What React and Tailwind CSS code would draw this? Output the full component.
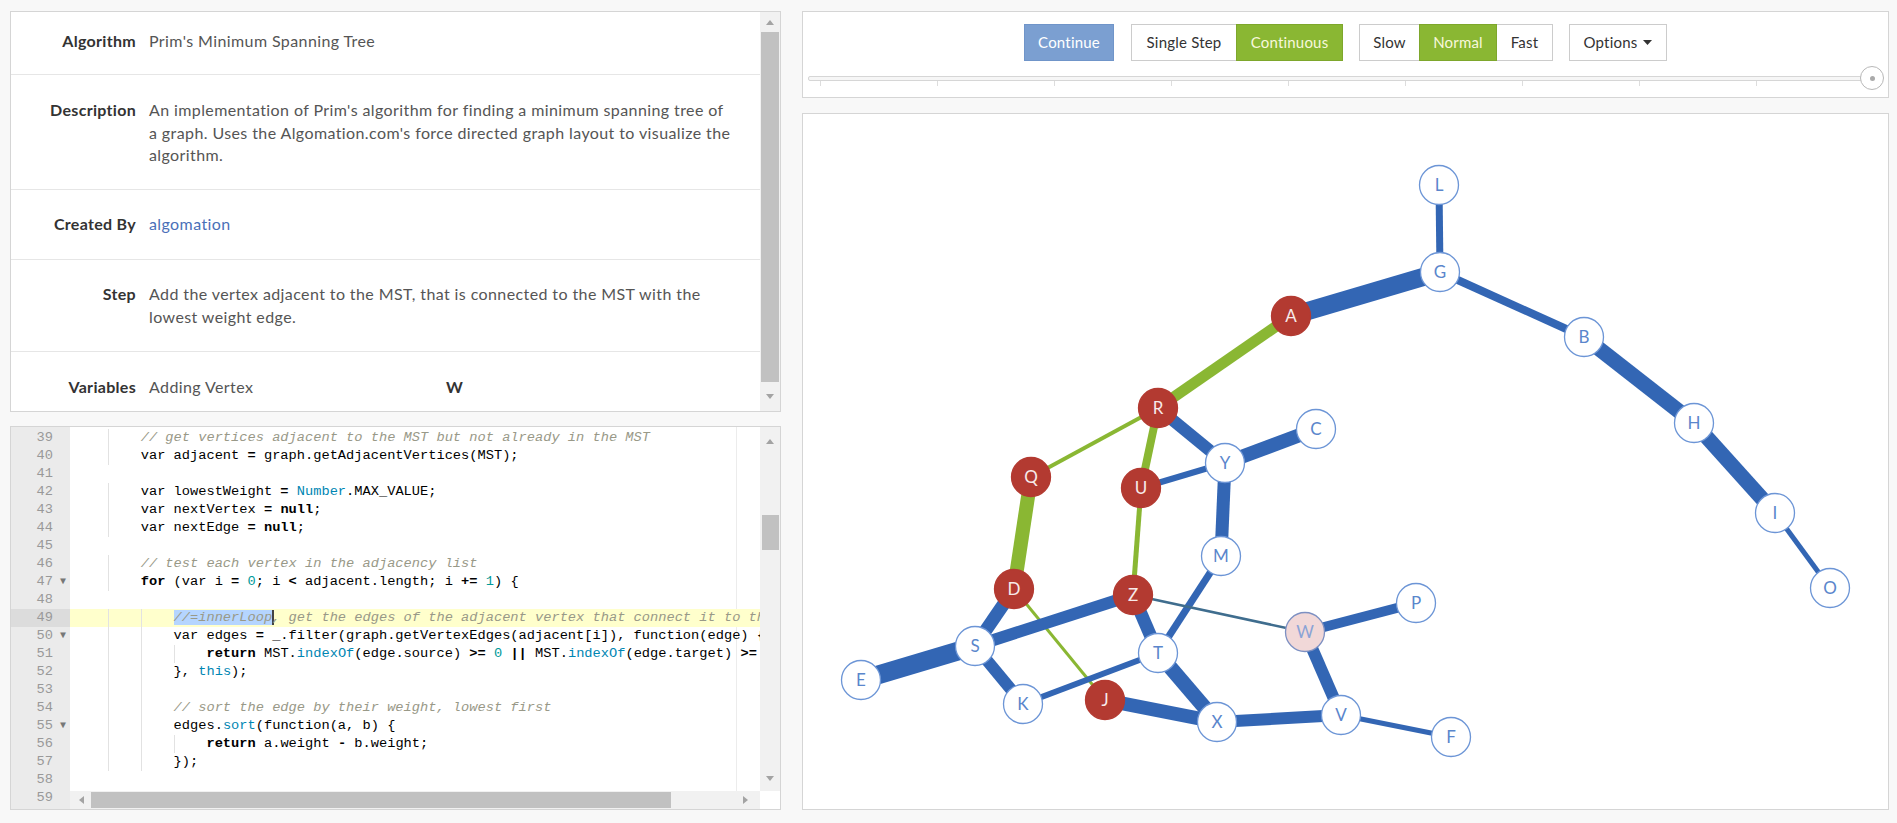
import React from "react";

const BLUE = "#3366b4";
const GREEN = "#8ab733";
const SLATE = "#3f6d8e";

const nodes = {
  L: [1439, 185, "w"], G: [1440, 272, "w"], A: [1291, 316, "r"], B: [1584, 337, "w"],
  H: [1694, 423, "w"], I: [1775, 513, "w"], O: [1830, 588, "w"], R: [1158, 408, "r"],
  C: [1316, 429, "w"], Y: [1225, 463, "w"], Q: [1031, 477, "r"], U: [1141, 488, "r"],
  M: [1221, 556, "w"], D: [1014, 589, "r"], Z: [1133, 595, "r"], W: [1305, 632, "p"],
  P: [1416, 603, "w"], S: [975, 646, "w"], T: [1158, 653, "w"], E: [861, 680, "w"],
  K: [1023, 704, "w"], J: [1105, 700, "r"], X: [1217, 722, "w"], V: [1341, 715, "w"],
  F: [1451, 737, "w"],
};

const edges = [
  ["L", "G", 7, BLUE], ["G", "A", 18, BLUE], ["G", "B", 8, BLUE], ["B", "H", 15, BLUE],
  ["H", "I", 15, BLUE], ["I", "O", 5, BLUE], ["A", "R", 11, GREEN], ["R", "Q", 4, GREEN],
  ["R", "U", 8, GREEN], ["R", "Y", 12, BLUE], ["Y", "C", 14, BLUE], ["U", "Y", 6, BLUE],
  ["Y", "M", 13, BLUE], ["Q", "D", 14, GREEN], ["U", "Z", 5, GREEN], ["M", "T", 7, BLUE],
  ["D", "S", 13, BLUE], ["D", "J", 3, GREEN], ["Z", "S", 12, BLUE], ["Z", "T", 13, BLUE],
  ["Z", "W", 2.5, SLATE], ["W", "P", 10, BLUE], ["W", "V", 12, BLUE], ["S", "E", 19, BLUE],
  ["S", "K", 12, BLUE], ["K", "T", 6, BLUE], ["T", "X", 15, BLUE], ["J", "X", 14, BLUE],
  ["X", "V", 12, BLUE], ["V", "F", 5, BLUE],
];

// code lines: n, indent, tokens, fold, active
const code = [
  [39, 8, [["// get vertices adjacent to the MST but not already in the MST", "c"]]],
  [40, 8, [["var adjacent "], ["=", "o"], [" graph.getAdjacentVertices(MST);"]]],
  [41, 0, []],
  [42, 8, [["var lowestWeight "], ["=", "o"], [" "], ["Number", "f"], [".MAX_VALUE;"]]],
  [43, 8, [["var nextVertex "], ["=", "o"], [" "], ["null", "k"], [";"]]],
  [44, 8, [["var nextEdge "], ["=", "o"], [" "], ["null", "k"], [";"]]],
  [45, 0, []],
  [46, 8, [["// test each vertex in the adjacency list", "c"]]],
  [47, 8, [["for", "k"], [" (var i "], ["=", "o"], [" "], ["0", "n"], ["; i "], ["<", "o"], [" adjacent.length; i "], ["+=", "o"], [" "], ["1", "n"], [") {"]], true],
  [48, 0, []],
  [49, 12, [["//=innerLoop", "s"], [", get the edges of the adjacent vertex that connect it to the MST", "c"]], false, true],
  [50, 12, [["var edges "], ["=", "o"], [" _.filter(graph.getVertexEdges(adjacent[i]), function(edge) {"]], true],
  [51, 16, [["return", "k"], [" MST."], ["indexOf", "f"], ["(edge.source) "], [">=", "o"], [" "], ["0", "n"], [" "], ["||", "o"], [" MST."], ["indexOf", "f"], ["(edge.target) "], [">=", "o"], [" "], ["0", "n"], [";"]]],
  [52, 12, [["}, "], ["this", "f"], [");"]]],
  [53, 12, []],
  [54, 12, [["// sort the edge by their weight, lowest first", "c"]]],
  [55, 12, [["edges."], ["sort", "f"], ["(function(a, b) {"]], true],
  [56, 16, [["return", "k"], [" a.weight "], ["-", "o"], [" b.weight;"]]],
  [57, 12, [["});"]]],
  [58, 0, []],
  [59, 0, []],
];

const tokClass = {
  c: "italic text-[#999988]",
  k: "font-bold",
  o: "font-bold",
  n: "text-[#009999]",
  f: "text-[#0086b3]",
  s: "italic text-[#999988] bg-[#b5d5ff] shadow-[2px_0_0_#444]",
};

function Arrow({ dir }) {
  const pts = {
    up: "0,5 4,0 8,5",
    down: "0,0 4,5 8,0",
    left: "5,0 0,4 5,8",
    right: "0,0 5,4 0,8",
  }[dir];
  const horiz = dir === "left" || dir === "right";
  return (
    <svg width={horiz ? 5 : 8} height={horiz ? 8 : 5} viewBox={horiz ? "0 0 5 8" : "0 0 8 5"}>
      <polygon points={pts} fill="#a3a3a3" />
    </svg>
  );
}

function Row({ label, children, h, pt = "pt-[23px]", last }) {
  return (
    <div className={`flex items-start ${h} ${pt} ${last ? "" : "border-b border-[#e6e6e6]"}`}>
      <div className="w-[125px] shrink-0 text-right font-bold text-[#333] tracking-[0.3px]">{label}</div>
      <div className="ml-[13px] w-[610px] text-[#555] tracking-[0.4px]">{children}</div>
    </div>
  );
}

function InfoPanel() {
  return (
    <div className="flex h-[401px] border border-[#d5d5d5] bg-white text-[16px] leading-[22.5px]">
      <div className="flex-1 overflow-hidden">
        <Row label="Algorithm" h="h-[63px]" pt="pt-[18px]">Prim's Minimum Spanning Tree</Row>
        <Row label="Description" h="h-[115px]" pt="pt-[24px]">
          An implementation of Prim's algorithm for finding a minimum spanning tree of
          <br />
          a graph. Uses the Algomation.com's force directed graph layout to visualize the
          <br />
          algorithm.
        </Row>
        <Row label="Created By" h="h-[70px]">
          <span className="text-[#4a70b8]">algomation</span>
        </Row>
        <Row label="Step" h="h-[92px]">
          Add the vertex adjacent to the MST, that is connected to the MST with the
          <br />
          lowest weight edge.
        </Row>
        <Row label="Variables" h="h-[70px]" pt="pt-[24px]" last>
          <div className="flex">
            <span className="w-[297px]">Adding Vertex</span>
            <span className="font-bold text-[#333]">W</span>
          </div>
        </Row>
      </div>
      <div className="flex w-[20px] flex-col items-center bg-[#f1f1f1]">
        <div className="flex h-[20px] items-center"><Arrow dir="up" /></div>
        <div className="h-[350px] w-[18px] bg-[#c1c1c1]" />
        <div className="flex flex-1 items-center"><Arrow dir="down" /></div>
      </div>
    </div>
  );
}

function CodeLine({ n, ind, toks, fold, active }) {
  const chunks = [];
  for (let i = 0; i < ind / 4; i++) {
    chunks.push(
      <span key={i} className={`inline-block h-[18px] align-top ${i > 0 ? "shadow-[inset_1px_0_0_#e2e2e2]" : ""}`}>
        {"    "}
      </span>
    );
  }
  return (
    <div className="flex h-[18px]">
      <div className={`relative w-[59px] shrink-0 pr-[17px] text-right text-[#999] ${active ? "bg-[#dcdcdc]" : "bg-[#ebebeb]"}`}>
        {n}
        {fold && <span className="absolute right-[4px] top-0 text-[10px] text-[#777]">▼</span>}
      </div>
      <div className={`flex-1 overflow-hidden whitespace-pre pl-[5px] text-black ${active ? "bg-[#ffffcc]" : ""}`}>
        {chunks}
        {toks.map((t, i) => (
          <span key={i} className={t[1] ? tokClass[t[1]] : ""}>{t[0]}</span>
        ))}
      </div>
    </div>
  );
}

function CodePanel() {
  return (
    <div className="relative flex h-[384px] border border-[#d5d5d5] bg-white font-['Liberation_Mono',monospace] text-[13.7px] leading-[18px]">
      <div className="relative flex-1 overflow-hidden bg-[#ebebeb]">
        <div className="absolute bottom-0 left-[59px] right-0 top-0 bg-white" />
        <div className="absolute bottom-0 left-[725px] top-0 w-px bg-[#ececec]" />
        <div className="relative pt-[2px]">
          {code.map(([n, ind, toks, fold, active]) => (
            <CodeLine key={n} n={n} ind={ind} toks={toks} fold={fold} active={active} />
          ))}
        </div>
        <div className="absolute bottom-0 left-[59px] right-0 flex h-[18px] items-center bg-[#f1f1f1]">
          <div className="ml-[8px] flex w-[6px] justify-center"><Arrow dir="left" /></div>
          <div className="ml-[7px] h-[16px] w-[580px] bg-[#c1c1c1]" />
          <div className="ml-[72px]"><Arrow dir="right" /></div>
        </div>
      </div>
      <div className="flex w-[20px] flex-col">
        <div className="flex flex-1 flex-col items-center bg-[#f1f1f1]">
          <div className="flex h-[28px] items-center"><Arrow dir="up" /></div>
          <div className="mt-[60px] h-[35px] w-[17px] bg-[#c1c1c1]" />
          <div className="flex flex-1 items-end pb-[10px]"><Arrow dir="down" /></div>
        </div>
        <div className="h-[18px] bg-white" />
      </div>
    </div>
  );
}

function Btn({ children, w, kind, cls = "" }) {
  const k = {
    blue: "bg-[#7b9fd1] border-[#7095c9] text-white",
    white: "bg-white border-[#cccccc] text-[#333]",
    green: "bg-[#8ab733] border-[#7ea72c] text-[#f8f8dc]",
  }[kind];
  return (
    <div className={`flex h-[37px] items-center justify-center border ${k} ${w} ${cls}`}>{children}</div>
  );
}

function Controls() {
  const ticks = [0, 1, 2, 3, 4, 5, 6, 7, 8];
  return (
    <div className="relative h-[87px] border border-[#d5d5d5] bg-white text-[15px] tracking-[0.2px]">
      <div className="flex justify-center pt-[12px]">
        <Btn kind="blue" w="w-[90px]">Continue</Btn>
        <div className="ml-[17px] flex">
          <Btn kind="white" w="w-[105px]" cls="border-r-0">Single Step</Btn>
          <Btn kind="green" w="w-[107px]">Continuous</Btn>
        </div>
        <div className="ml-[16px] flex">
          <Btn kind="white" w="w-[60px]" cls="border-r-0">Slow</Btn>
          <Btn kind="green" w="w-[78px]">Normal</Btn>
          <Btn kind="white" w="w-[56px]" cls="border-l-0">Fast</Btn>
        </div>
        <Btn kind="white" w="w-[98px]" cls="ml-[16px] gap-[6px]">
          Options
          <svg width="9" height="5" viewBox="0 0 9 5"><polygon points="0,0 9,0 4.5,5" fill="#333" /></svg>
        </Btn>
      </div>
      <div className="ml-[5px] mt-[15px] h-[5px] w-[1063px] rounded-[2px] border border-[#d6d6d6] bg-[#f6f6f6]" />
      <div className="flex gap-[116px] pl-[17px]">
        {ticks.map((t) => (
          <div key={t} className="h-[5px] w-px bg-[#dddddd]" />
        ))}
      </div>
      <div className="absolute left-[1057px] top-[54px] flex h-[24px] w-[24px] items-center justify-center rounded-full border border-[#b8b8b8] bg-white">
        <div className="h-[5px] w-[5px] rounded-full bg-[#aaaaaa]" />
      </div>
    </div>
  );
}

function Graph() {
  return (
    <div className="h-[697px] overflow-hidden border border-[#d5d5d5] bg-white">
      <svg width="1085" height="695" viewBox="803 114 1085 695">
        {edges.map(([a, b, w, c], i) => (
          <line key={i} x1={nodes[a][0]} y1={nodes[a][1]} x2={nodes[b][0]} y2={nodes[b][1]} stroke={c} strokeWidth={w} />
        ))}
        {Object.entries(nodes).map(([k, [x, y, t]]) => {
          const fill = t === "r" ? "#b33a31" : t === "p" ? "#f1d8d8" : "#ffffff";
          const stroke = t === "r" ? "#b33a31" : t === "p" ? "#7d90c2" : "#6c95d6";
          const tc = t === "r" ? "#f7eaea" : t === "p" ? "#8aa3d6" : "#5a86cc";
          return (
            <g key={k}>
              <circle cx={x} cy={y} r="19.5" fill={fill} stroke={stroke} strokeWidth="1.3" />
              <text x={x} y={y} dy="0.36em" textAnchor="middle" fontSize="17" fontFamily="Lato, sans-serif" fill={tc}>
                {k}
              </text>
            </g>
          );
        })}
      </svg>
    </div>
  );
}

export default function App() {
  return (
    <div className="flex h-screen w-full gap-[21px] bg-[#f8f8f8] pl-[10px] pr-[8px] pt-[11px] font-['Lato',sans-serif]">
      <div className="flex w-[771px] shrink-0 flex-col gap-[14px]">
        <InfoPanel />
        <CodePanel />
      </div>
      <div className="flex flex-1 flex-col gap-[15px]">
        <Controls />
        <Graph />
      </div>
    </div>
  );
}
